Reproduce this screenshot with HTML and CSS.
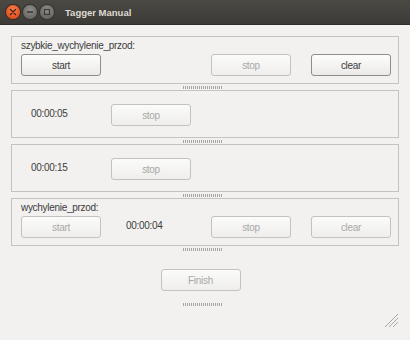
FILE: index.html
```html
<!DOCTYPE html>
<html lang="en">
<head>
  <meta charset="UTF-8" />
  <title>Tagger Manual</title>
  <link rel="stylesheet" href="styles.css">
</head>
<body>
  <div class="window">
    <div class="titlebar">
      <span class="wbtn close">
        <svg width="14" height="14" viewBox="0 0 14 14"><path d="M4.5 4.5 L9.5 9.5 M9.5 4.5 L4.5 9.5" stroke="#4a1f0e" stroke-width="1.4" stroke-linecap="round"/></svg>
      </span>
      <span class="wbtn grey">
        <svg width="14" height="14" viewBox="0 0 14 14"><path d="M4 7 H10" stroke="#3a3a37" stroke-width="1.6"/></svg>
      </span>
      <span class="wbtn grey">
        <svg width="14" height="14" viewBox="0 0 14 14"><rect x="4.5" y="4.5" width="5" height="5" fill="none" stroke="#3a3a37" stroke-width="1.2"/></svg>
      </span>
      <span class="title">Tagger Manual</span>
    </div>

    <div class="content">
      <div class="group">
        <div class="group-label">szybkie_wychylenie_przod:</div>
        <div class="row">
          <button class="btn">start</button>
          <span class="time"></span>
          <button class="btn" disabled>stop</button>
          <span></span>
          <button class="btn">clear</button>
        </div>
      </div>
      <div class="splitter"><span class="handle"></span></div>

      <div class="group timer">
        <span class="time">00:00:05</span>
        <button class="btn" disabled>stop</button>
      </div>
      <div class="splitter"><span class="handle"></span></div>

      <div class="group timer">
        <span class="time">00:00:15</span>
        <button class="btn" disabled>stop</button>
      </div>
      <div class="splitter"><span class="handle"></span></div>

      <div class="group">
        <div class="group-label">wychylenie_przod:</div>
        <div class="row">
          <button class="btn" disabled>start</button>
          <span class="time">00:00:04</span>
          <button class="btn" disabled>stop</button>
          <span></span>
          <button class="btn" disabled>clear</button>
        </div>
      </div>
      <div class="splitter"><span class="handle"></span></div>

      <div class="finish-row">
        <button class="btn" disabled>Finish</button>
      </div>
      <div class="splitter"><span class="handle"></span></div>

      <div class="grip-row">
        <svg class="grip" width="16" height="16" viewBox="0 0 16 16">
          <g fill="#a8a7a4">
            <rect x="14" y="2" width="1" height="1"/><rect x="13" y="3" width="1" height="1"/><rect x="12" y="4" width="1" height="1"/><rect x="11" y="5" width="1" height="1"/><rect x="10" y="6" width="1" height="1"/><rect x="9" y="7" width="1" height="1"/><rect x="8" y="8" width="1" height="1"/><rect x="7" y="9" width="1" height="1"/><rect x="6" y="10" width="1" height="1"/><rect x="5" y="11" width="1" height="1"/><rect x="4" y="12" width="1" height="1"/><rect x="3" y="13" width="1" height="1"/><rect x="2" y="14" width="1" height="1"/>
            <rect x="14" y="6" width="1" height="1"/><rect x="13" y="7" width="1" height="1"/><rect x="12" y="8" width="1" height="1"/><rect x="11" y="9" width="1" height="1"/><rect x="10" y="10" width="1" height="1"/><rect x="9" y="11" width="1" height="1"/><rect x="8" y="12" width="1" height="1"/><rect x="7" y="13" width="1" height="1"/><rect x="6" y="14" width="1" height="1"/>
            <rect x="14" y="10" width="1" height="1"/><rect x="13" y="11" width="1" height="1"/><rect x="12" y="12" width="1" height="1"/><rect x="11" y="13" width="1" height="1"/><rect x="10" y="14" width="1" height="1"/>
          </g>
        </svg>
      </div>
    </div>
  </div>
</body>
</html>
```

FILE: styles.css
```css
body {
  margin: 0;
  font-family: "Liberation Sans", Arial, sans-serif;
  font-size: 10px;
  letter-spacing: -0.3px;
  color: #3c3c3c;
  background: #f2f1f0;
}

.window {
  width: 410px;
  height: 340px;
  display: flex;
  flex-direction: column;
  background: #f2f1f0;
  overflow: hidden;
}

.titlebar {
  height: 25px;
  flex-shrink: 0;
  display: flex;
  align-items: center;
  padding-left: 6px;
  gap: 3px;
  background: linear-gradient(#4a4944, #3c3b37);
  border-bottom: 1px solid #2e2d2a;
  box-sizing: border-box;
}

.wbtn {
  width: 14px;
  height: 14px;
  border-radius: 50%;
  display: flex;
}

.wbtn.close {
  background: radial-gradient(circle at 50% 35%, #f5814f, #e0501f 70%);
  box-shadow: 0 0 0 1px #3a2a20;
}

.wbtn.grey {
  background: radial-gradient(circle at 50% 35%, #8f8e89, #6a6964 70%);
  box-shadow: 0 0 0 1px #34332f;
}

.title {
  margin-left: 8px;
  color: #dfdbd2;
  font-weight: bold;
  font-size: 9.5px;
  letter-spacing: 0;
}

.content {
  display: flex;
  flex-direction: column;
  padding: 11px 11px 0 11px;
}

.group {
  height: 48px;
  box-sizing: border-box;
  border: 1px solid #c4c3c0;
  padding: 2px 9px 0 9px;
  display: flex;
  flex-direction: column;
}

.group-label {
  height: 13px;
  line-height: 13px;
  margin-bottom: 2px;
}

.row {
  display: grid;
  grid-template-columns: 80px 110px 80px 20px 80px;
  align-items: center;
}

.row .time {
  padding-left: 25px;
  margin-top: -4px;
}

.group.timer {
  flex-direction: row;
  align-items: center;
  padding: 2px 0 0 19px;
}

.group.timer .time {
  width: 80px;
  margin-top: -3px;
}

.btn {
  width: 80px;
  height: 22px;
  font-family: inherit;
  font-size: 10px;
  letter-spacing: inherit;
  color: #3c3c3c;
  border: 1px solid #8e8d8a;
  border-radius: 3px;
  background: linear-gradient(#fdfdfc, #ebeae8);
  padding: 0;
}

.btn:disabled {
  color: #a9a8a6;
  border-color: #c3c2bf;
  background: linear-gradient(#fbfbfa, #efeeec);
}

.splitter {
  height: 6px;
  display: flex;
  align-items: center;
  justify-content: center;
}

.handle {
  width: 39px;
  height: 3px;
  margin-left: -5px;
  background: repeating-linear-gradient(90deg, #a6a5a2 0 1px, transparent 1px 2px);
}

.finish-row {
  display: flex;
  justify-content: center;
  padding: 17px 0 10px;
  margin-left: -9px;
}

.grip-row {
  display: flex;
  justify-content: flex-end;
  padding-top: 5px;
}
```
